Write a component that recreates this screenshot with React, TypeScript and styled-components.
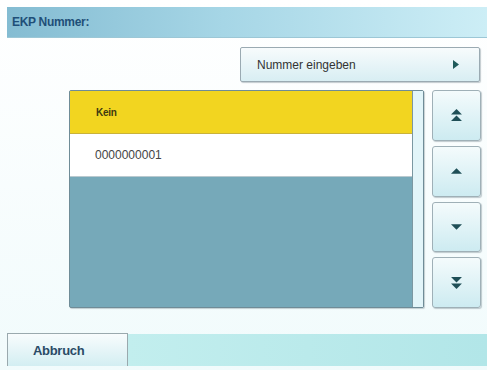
import styled, { createGlobalStyle } from "styled-components";

const GlobalStyle = createGlobalStyle`
  html, body {
    margin: 0;
    padding: 0;
    background: #f6fdfd;
    font-family: "Liberation Sans", Arial, sans-serif;
  }
`;

const Screen = styled.div`
  width: 487px;
  height: 370px;
  display: flex;
  flex-direction: column;
  padding-top: 7px;
  box-sizing: border-box;
  background: linear-gradient(#ffffff, #f1fbfc);
  overflow: hidden;
`;

const Header = styled.div`
  height: 30px;
  margin-left: 7px;
  display: flex;
  align-items: center;
  padding-left: 5px;
  background: linear-gradient(90deg, #84bcd2 0%, #a6d6e6 45%, #cdeef6 100%);
  border-bottom: 1px solid #9cc7d6;
  color: #1f4f78;
  font-size: 12px;
  font-weight: bold;
  letter-spacing: -0.3px;
`;

const ActionRow = styled.div`
  display: flex;
  justify-content: flex-end;
  padding-right: 7px;
  margin-top: 9px;
`;

const WideButton = styled.div`
  width: 240px;
  height: 35px;
  box-sizing: border-box;
  display: flex;
  align-items: center;
  justify-content: space-between;
  padding: 0 20px 0 16px;
  border: 1px solid #9aaab2;
  border-radius: 2px;
  background: linear-gradient(#f7fbfc, #d8eef3);
  box-shadow: 1px 1px 1px rgba(90, 110, 120, 0.35);
  color: #333;
  font-size: 12px;
`;

const Content = styled.div`
  display: flex;
  margin-top: 8px;
  padding-left: 69px;
  padding-right: 6px;
  gap: 8px;
`;

const ListBox = styled.div`
  width: 355px;
  height: 218px;
  display: flex;
  border: 1px solid #6f8c97;
  border-radius: 2px;
  box-sizing: border-box;
  background: #76a9b9;
  box-shadow: 1px 1px 1px rgba(80, 100, 110, 0.3);
`;

const Rows = styled.div`
  flex: 1;
  display: flex;
  flex-direction: column;
`;

const Row = styled.div<{ $selected?: boolean }>`
  height: 42px;
  display: flex;
  align-items: center;
  padding-left: ${(p) => (p.$selected ? "26px" : "25px")};
  background: ${(p) => (p.$selected ? "#f2d520" : "#ffffff")};
  border-bottom: 1px solid ${(p) => (p.$selected ? "#c9b23a" : "#b9c9cf")};
  color: ${(p) => (p.$selected ? "#3f3a10" : "#444")};
  font-size: ${(p) => (p.$selected ? "10px" : "12px")};
  font-weight: ${(p) => (p.$selected ? "bold" : "normal")};
  letter-spacing: ${(p) => (p.$selected ? "-0.3px" : "0")};
`;

const ScrollTrack = styled.div`
  width: 10px;
  background: #e2f5f9;
  border-left: 1px solid #7b98a2;
`;

const ScrollButtons = styled.div`
  display: grid;
  grid-template-rows: repeat(4, 1fr);
  gap: 5px;
  width: 49px;
  height: 218px;
`;

const ScrollButton = styled.div`
  display: flex;
  align-items: center;
  justify-content: center;
  border: 1px solid #9fb0b7;
  border-radius: 3px;
  background: linear-gradient(#f4fbfc, #cdebf1);
  box-shadow: 1px 1px 1px rgba(90, 110, 120, 0.35);
`;

const Spacer = styled.div`
  flex: 1;
`;

const Footer = styled.div`
  display: flex;
  height: 33px;
  margin-bottom: 4px;
  padding-left: 7px;
`;

const CancelButton = styled.div`
  width: 121px;
  box-sizing: border-box;
  display: flex;
  align-items: center;
  padding-left: 25px;
  border: 1px solid #9aa9ae;
  border-bottom: none;
  background: linear-gradient(#f8fcfd, #d3eef2);
  color: #2a4a66;
  font-size: 13px;
  font-weight: bold;
  letter-spacing: -0.3px;
`;

const FooterBar = styled.div`
  flex: 1;
  margin-top: 1px;
  background: linear-gradient(90deg, #c2eeee, #b2e6e8);
`;

const Arrow = ({ dir, double }: { dir: "up" | "down"; double?: boolean }) => {
  const up = "M0 5 L5 0 L10 5 Z";
  const down = "M0 0 L10 0 L5 5 Z";
  const d = dir === "up" ? up : down;
  return (
    <svg width="11" height={double ? 12 : 6} viewBox={`0 0 10 ${double ? 11 : 5}`}>
      <path d={d} fill="#1f4f57" />
      {double && <path d={d} transform="translate(0 6)" fill="#1f4f57" />}
    </svg>
  );
};

export default function App() {
  return (
    <>
      <GlobalStyle />
      <Screen>
        <Header>EKP Nummer:</Header>
        <ActionRow>
          <WideButton>
            <span>Nummer eingeben</span>
            <svg width="6" height="9" viewBox="0 0 6 9">
              <path d="M0 0 L6 4.5 L0 9 Z" fill="#1f5a5a" />
            </svg>
          </WideButton>
        </ActionRow>
        <Content>
          <ListBox>
            <Rows>
              <Row $selected>Kein</Row>
              <Row>0000000001</Row>
            </Rows>
            <ScrollTrack />
          </ListBox>
          <ScrollButtons>
            <ScrollButton>
              <Arrow dir="up" double />
            </ScrollButton>
            <ScrollButton>
              <Arrow dir="up" />
            </ScrollButton>
            <ScrollButton>
              <Arrow dir="down" />
            </ScrollButton>
            <ScrollButton>
              <Arrow dir="down" double />
            </ScrollButton>
          </ScrollButtons>
        </Content>
        <Spacer />
        <Footer>
          <CancelButton>Abbruch</CancelButton>
          <FooterBar />
        </Footer>
      </Screen>
    </>
  );
}
